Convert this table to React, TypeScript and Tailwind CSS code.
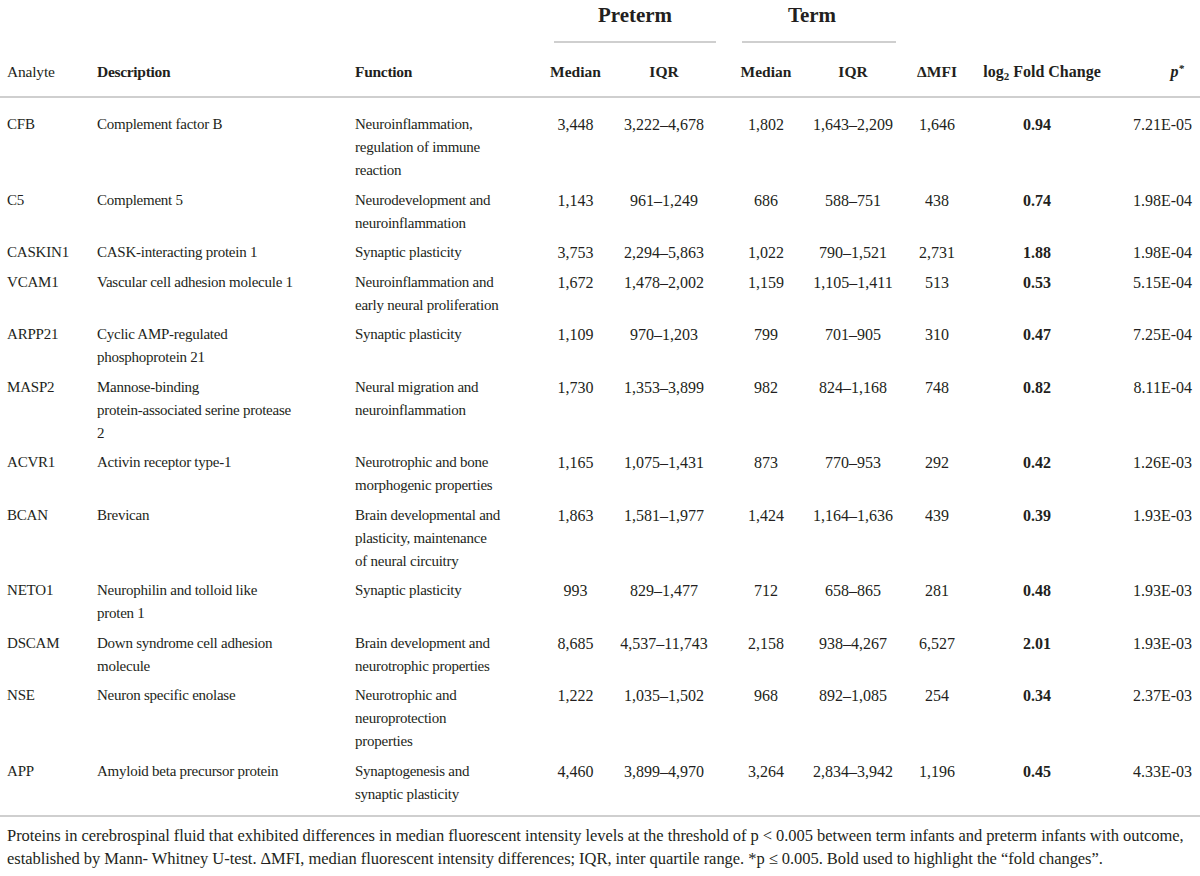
import React from "react"

type Row = {
  analyte: string
  desc: string[]
  fn: string[]
  preMed: string
  preIqr: string
  termMed: string
  termIqr: string
  dmfi: string
  fold: string
  p: string
}

const rows: Row[] = [
  { analyte: "CFB", desc: ["Complement factor B"], fn: ["Neuroinflammation,", "regulation of immune", "reaction"], preMed: "3,448", preIqr: "3,222–4,678", termMed: "1,802", termIqr: "1,643–2,209", dmfi: "1,646", fold: "0.94", p: "7.21E-05" },
  { analyte: "C5", desc: ["Complement 5"], fn: ["Neurodevelopment and", "neuroinflammation"], preMed: "1,143", preIqr: "961–1,249", termMed: "686", termIqr: "588–751", dmfi: "438", fold: "0.74", p: "1.98E-04" },
  { analyte: "CASKIN1", desc: ["CASK-interacting protein 1"], fn: ["Synaptic plasticity"], preMed: "3,753", preIqr: "2,294–5,863", termMed: "1,022", termIqr: "790–1,521", dmfi: "2,731", fold: "1.88", p: "1.98E-04" },
  { analyte: "VCAM1", desc: ["Vascular cell adhesion molecule 1"], fn: ["Neuroinflammation and", "early neural proliferation"], preMed: "1,672", preIqr: "1,478–2,002", termMed: "1,159", termIqr: "1,105–1,411", dmfi: "513", fold: "0.53", p: "5.15E-04" },
  { analyte: "ARPP21", desc: ["Cyclic AMP-regulated", "phosphoprotein 21"], fn: ["Synaptic plasticity"], preMed: "1,109", preIqr: "970–1,203", termMed: "799", termIqr: "701–905", dmfi: "310", fold: "0.47", p: "7.25E-04" },
  { analyte: "MASP2", desc: ["Mannose-binding", "protein-associated serine protease", "2"], fn: ["Neural migration and", "neuroinflammation"], preMed: "1,730", preIqr: "1,353–3,899", termMed: "982", termIqr: "824–1,168", dmfi: "748", fold: "0.82", p: "8.11E-04" },
  { analyte: "ACVR1", desc: ["Activin receptor type-1"], fn: ["Neurotrophic and bone", "morphogenic properties"], preMed: "1,165", preIqr: "1,075–1,431", termMed: "873", termIqr: "770–953", dmfi: "292", fold: "0.42", p: "1.26E-03" },
  { analyte: "BCAN", desc: ["Brevican"], fn: ["Brain developmental and", "plasticity, maintenance", "of neural circuitry"], preMed: "1,863", preIqr: "1,581–1,977", termMed: "1,424", termIqr: "1,164–1,636", dmfi: "439", fold: "0.39", p: "1.93E-03" },
  { analyte: "NETO1", desc: ["Neurophilin and tolloid like", "proten 1"], fn: ["Synaptic plasticity"], preMed: "993", preIqr: "829–1,477", termMed: "712", termIqr: "658–865", dmfi: "281", fold: "0.48", p: "1.93E-03" },
  { analyte: "DSCAM", desc: ["Down syndrome cell adhesion", "molecule"], fn: ["Brain development and", "neurotrophic properties"], preMed: "8,685", preIqr: "4,537–11,743", termMed: "2,158", termIqr: "938–4,267", dmfi: "6,527", fold: "2.01", p: "1.93E-03" },
  { analyte: "NSE", desc: ["Neuron specific enolase"], fn: ["Neurotrophic and", "neuroprotection", "properties"], preMed: "1,222", preIqr: "1,035–1,502", termMed: "968", termIqr: "892–1,085", dmfi: "254", fold: "0.34", p: "2.37E-03" },
  { analyte: "APP", desc: ["Amyloid beta precursor protein"], fn: ["Synaptogenesis and", "synaptic plasticity"], preMed: "4,460", preIqr: "3,899–4,970", termMed: "3,264", termIqr: "2,834–3,942", dmfi: "1,196", fold: "0.45", p: "4.33E-03" },
]

const cols = "grid grid-cols-[90px_258px_197px_61px_116px_88px_86px_82px_124px_98px]"

function Lines({ lines }: { lines: string[] }) {
  return (
    <>
      {lines.map((l, i) => (
        <div key={i} className="whitespace-nowrap">{l}</div>
      ))}
    </>
  )
}

export default function App() {
  return (
    <div className="w-[1200px] h-[876px] bg-white text-[#231f20] font-['Liberation_Serif','Times_New_Roman',serif] text-[15px] leading-[23px]">
      {/* group headers */}
      <div className={cols}>
        <div className="col-start-4 col-span-2 ml-[9px] mr-[6px]">
          <div className="text-center font-bold text-[21px] leading-[30px]">Preterm</div>
          <div className="mt-[11px] h-[2px] bg-[#cfcfcf]" />
        </div>
        <div className="col-span-2 ml-[20px]">
          <div className="text-center font-bold text-[21px] leading-[30px] pr-[14px]">Term</div>
          <div className="mt-[11px] h-[2px] bg-[#cfcfcf]" />
        </div>
      </div>

      {/* column headers */}
      <div className={`${cols} pt-[17px] pb-[13px] border-b-2 border-[#cfcfcf] text-[15.5px]`}>
        <div className="pl-[7px] tracking-[-0.2px]">Analyte</div>
        <div className="pl-[7px] font-bold tracking-[-0.3px]">Description</div>
        <div className="pl-[7px] font-bold tracking-[-0.3px]">Function</div>
        <div className="text-center font-bold">Median</div>
        <div className="text-center font-bold">IQR</div>
        <div className="text-center font-bold">Median</div>
        <div className="text-center font-bold">IQR</div>
        <div className="text-center font-bold">ΔMFI</div>
        <div className="text-center font-bold whitespace-nowrap pl-[4px] text-[16px]">
          log<sub className="text-[11px] align-baseline relative top-[3px]">2</sub> Fold Change
        </div>
        <div className="text-right pr-[16px] font-bold italic text-[16px]">
          p<sup className="text-[11px] align-baseline relative -top-[5px]">*</sup>
        </div>
      </div>

      {/* body */}
      <div className="pt-[12px] pb-[6px] border-b-2 border-[#cfcfcf]">
        {rows.map((r) => (
          <div key={r.analyte} className={`${cols} py-[3.25px]`}>
            <div className="pl-[7px] tracking-[-0.2px]">{r.analyte}</div>
            <div className="pl-[7px] tracking-[-0.25px]"><Lines lines={r.desc} /></div>
            <div className="pl-[7px] tracking-[-0.25px]"><Lines lines={r.fn} /></div>
            <div className="text-center text-[16px]">{r.preMed}</div>
            <div className="text-center text-[16px] whitespace-nowrap">{r.preIqr}</div>
            <div className="text-center text-[16px]">{r.termMed}</div>
            <div className="text-center text-[16px] whitespace-nowrap">{r.termIqr}</div>
            <div className="text-center text-[16px]">{r.dmfi}</div>
            <div className="text-center text-[16px] font-bold pr-[6px]">{r.fold}</div>
            <div className="text-right text-[16px] pr-[8px]">{r.p}</div>
          </div>
        ))}
      </div>

      {/* footnote */}
      <div className="px-[7px] pt-[7px] text-[16.5px] leading-[23px] whitespace-nowrap tracking-[-0.05px]">
        Proteins in cerebrospinal fluid that exhibited differences in median fluorescent intensity levels at the threshold of p &lt; 0.005 between term infants and preterm infants with outcome,
        <br />
        established by Mann- Whitney U-test. ΔMFI, median fluorescent intensity differences; IQR, inter quartile range. *p ≤ 0.005. Bold used to highlight the “fold changes”.
      </div>
    </div>
  )
}
